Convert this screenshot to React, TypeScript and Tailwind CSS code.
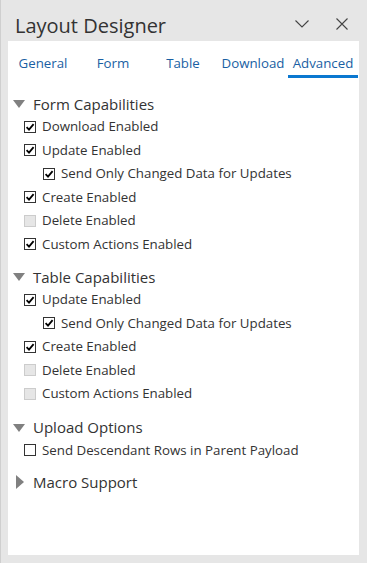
import { ReactNode } from "react";

type Item = { label: string; checked: boolean; disabled?: boolean; indent?: boolean };

const formItems: Item[] = [
  { label: "Download Enabled", checked: true },
  { label: "Update Enabled", checked: true },
  { label: "Send Only Changed Data for Updates", checked: true, indent: true },
  { label: "Create Enabled", checked: true },
  { label: "Delete Enabled", checked: false, disabled: true },
  { label: "Custom Actions Enabled", checked: true },
];

const tableItems: Item[] = [
  { label: "Update Enabled", checked: true },
  { label: "Send Only Changed Data for Updates", checked: true, indent: true },
  { label: "Create Enabled", checked: true },
  { label: "Delete Enabled", checked: false, disabled: true },
  { label: "Custom Actions Enabled", checked: false, disabled: true },
];

const uploadItems: Item[] = [
  { label: "Send Descendant Rows in Parent Payload", checked: false },
];

const tabs = ["General", "Form", "Table", "Download", "Advanced"];

const Checkbox = ({ checked, disabled }: { checked: boolean; disabled?: boolean }) => (
  <span
    className={
      disabled
        ? "w-[12px] h-[12px] border border-[#cccccc] bg-[#e6e6e6] shrink-0"
        : "w-[12px] h-[12px] border border-[#333333] bg-white shrink-0 flex items-center justify-center"
    }
  >
    {checked && (
      <svg width="10" height="10" viewBox="0 0 10 10">
        <path d="M1.6 5.2 L4 7.6 L8.6 2.2" fill="none" stroke="#000" strokeWidth="1.8" />
      </svg>
    )}
  </span>
);

const Row = ({ item }: { item: Item }) => (
  <div className={`h-[23.5px] flex items-center gap-[6px] ${item.indent ? "pl-[35px]" : "pl-[16px]"}`}>
    <Checkbox checked={item.checked} disabled={item.disabled} />
    <span className="text-[13.3px] text-[#333333] leading-none whitespace-nowrap">{item.label}</span>
  </div>
);

const Section = ({
  title,
  open = true,
  className = "",
  children,
}: {
  title: string;
  open?: boolean;
  className?: string;
  children?: ReactNode;
}) => (
  <div className={className}>
    <div className="h-[22px] flex items-center pl-[5px]">
      {open ? (
        <svg width="12" height="8" viewBox="0 0 12 8" className="mr-[8px]">
          <path d="M0 0 H12 L6 8 Z" fill="#808080" />
        </svg>
      ) : (
        <svg width="8" height="14" viewBox="0 0 8 14" className="ml-[3px] mr-[9px]">
          <path d="M0 0 L8 7 L0 14 Z" fill="#808080" />
        </svg>
      )}
      <span className="text-[15px] text-[#333333] leading-none whitespace-nowrap">{title}</span>
    </div>
    {children}
  </div>
);

export default function App() {
  return (
    <div
      className="w-[367px] h-[563px] bg-[#e6e6e6] border-l border-[#cfcfcf] flex flex-col overflow-hidden"
      style={{ fontFamily: '"Open Sans", "Noto Sans", sans-serif' }}
    >
      <div className="h-[41px] shrink-0 flex items-start pt-[16px] pl-[14px] pr-[18px]">
        <h1 className="text-[20px] text-[#333333] leading-none flex-1">Layout Designer</h1>
        <svg width="14" height="8" viewBox="0 0 14 8" className="mt-[4px] mr-[27px]">
          <path d="M0.5 0.5 L7 7 L13.5 0.5" fill="none" stroke="#444" strokeWidth="1.1" />
        </svg>
        <svg width="12" height="12" viewBox="0 0 12 12" className="mt-[2px] mr-[1px]">
          <path d="M0.5 0.5 L11.5 11.5 M11.5 0.5 L0.5 11.5" fill="none" stroke="#444" strokeWidth="1.1" />
        </svg>
      </div>

      <div className="ml-[7px] w-[351px] h-[514px] bg-white flex flex-col">
        <div className="flex h-[37px] shrink-0">
          {tabs.map((tab) => (
            <div
              key={tab}
              className={`w-[70px] flex items-start justify-center pt-[13px] text-[13.3px] leading-[18px] text-[#1a5fa3] whitespace-nowrap ${
                tab === "Advanced" ? "border-b-[3px] border-[#0b78d0]" : ""
              }`}
            >
              {tab}
            </div>
          ))}
        </div>

        <Section title="Form Capabilities" className="mt-[15px]">
          {formItems.map((item) => (
            <Row key={item.label} item={item} />
          ))}
        </Section>

        <Section title="Table Capabilities" className="mt-[10px]">
          {tableItems.map((item) => (
            <Row key={item.label} item={item} />
          ))}
        </Section>

        <Section title="Upload Options" className="mt-[11px]">
          {uploadItems.map((item) => (
            <Row key={item.label} item={item} />
          ))}
        </Section>

        <Section title="Macro Support" open={false} className="mt-[9px]" />
      </div>
    </div>
  );
}
